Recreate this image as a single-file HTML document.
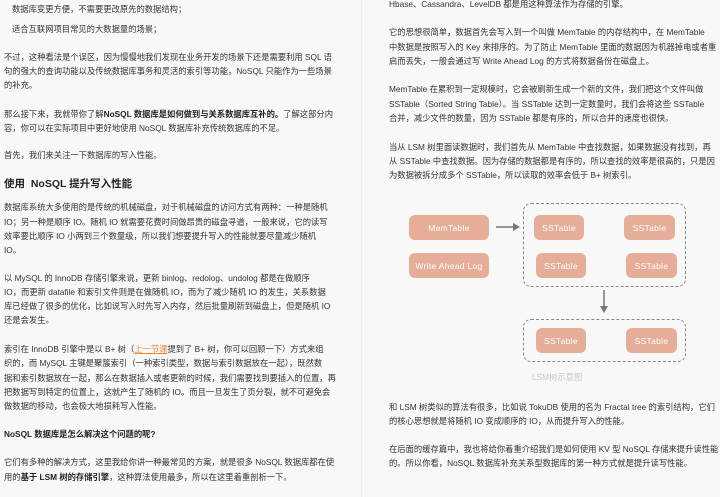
<!DOCTYPE html>
<html><head><meta charset="utf-8"><style>
html,body{margin:0;padding:0;}
body{width:720px;height:497px;background:#f8f8f8;position:relative;overflow:hidden;font-family:"Liberation Sans","Noto Sans CJK SC",sans-serif;color:#333;font-size:8.3px;}
.l{position:absolute;white-space:nowrap;line-height:14px;height:14px;}
.b{font-weight:bold;color:#222;}
.h{font-weight:bold;font-size:10.5px;color:#222;}
a{color:#e8892f;text-decoration:underline;}
.div{position:absolute;left:361px;top:0;width:1px;height:497px;background:#ececec;}
.box{position:absolute;background:#e6ad98;border-radius:6px;color:#fff;font-size:8.5px;display:flex;align-items:center;justify-content:center;font-family:"Liberation Sans",sans-serif;letter-spacing:0.3px;}
.dash{position:absolute;border:1.5px dashed #888;border-radius:8px;box-sizing:border-box;}
</style></head><body>
<div class="div"></div>
<div class="l" style="left:12px;top:2px">数据库变更方便，不需要更改原先的数据结构；</div>
<div class="l" style="left:12px;top:22px">适合互联网项目常见的大数据量的场景；</div>
<div class="l" style="left:4px;top:50px">不过，这种看法是个误区，因为慢慢地我们发现在业务开发的场景下还是需要利用 SQL 语</div>
<div class="l" style="left:4px;top:64px">句的强大的查询功能以及传统数据库事务和灵活的索引等功能，NoSQL 只能作为一些场景</div>
<div class="l" style="left:4px;top:78px">的补充。</div>
<div class="l" style="left:4px;top:107px">那么接下来，我就带你了解<span class="b">NoSQL 数据库是如何做到与关系数据库互补的。</span>了解这部分内</div>
<div class="l" style="left:4px;top:121px">容，你可以在实际项目中更好地使用 NoSQL 数据库补充传统数据库的不足。</div>
<div class="l" style="left:4px;top:148px">首先，我们来关注一下数据库的写入性能。</div>
<div class="l h" style="left:4px;top:177px">使用 &nbsp;NoSQL 提升写入性能</div>
<div class="l" style="left:4px;top:200px">数据库系统大多使用的是传统的机械磁盘，对于机械磁盘的访问方式有两种：一种是随机</div>
<div class="l" style="left:4px;top:215px">IO；另一种是顺序 IO。随机 IO 就需要花费时间做昂贵的磁盘寻道，一般来说，它的读写</div>
<div class="l" style="left:4px;top:229px">效率要比顺序 IO 小两到三个数量级，所以我们想要提升写入的性能就要尽量减少随机</div>
<div class="l" style="left:4px;top:243px">IO。</div>
<div class="l" style="left:4px;top:271px">以 MySQL 的 InnoDB 存储引擎来说，更新 binlog、redolog、undolog 都是在做顺序</div>
<div class="l" style="left:4px;top:285px">IO，而更新 datafile 和索引文件则是在做随机 IO，而为了减少随机 IO 的发生，关系数据</div>
<div class="l" style="left:4px;top:299px">库已经做了很多的优化，比如说写入时先写入内存，然后批量刷新到磁盘上，但是随机 IO</div>
<div class="l" style="left:4px;top:313px">还是会发生。</div>
<div class="l" style="left:4px;top:342px">索引在 InnoDB 引擎中是以 B+ 树（<a>上一节课</a>提到了 B+ 树，你可以回顾一下）方式来组</div>
<div class="l" style="left:4px;top:356px">织的，而 MySQL 主键是聚簇索引（一种索引类型，数据与索引数据放在一起），既然数</div>
<div class="l" style="left:4px;top:371px">据和索引数据放在一起，那么在数据插入或者更新的时候，我们需要找到要插入的位置，再</div>
<div class="l" style="left:4px;top:385px">把数据写到特定的位置上，这就产生了随机的 IO。而且一旦发生了页分裂，就不可避免会</div>
<div class="l" style="left:4px;top:399px">做数据的移动，也会极大地损耗写入性能。</div>
<div class="l b" style="left:4px;top:427px">NoSQL 数据库是怎么解决这个问题的呢?</div>
<div class="l" style="left:4px;top:455px">它们有多种的解决方式，这里我给你讲一种最常见的方案，就是很多 NoSQL 数据库都在使</div>
<div class="l" style="left:4px;top:470px">用的<span class="b">基于 LSM 树的存储引擎</span>，这种算法使用最多，所以在这里着重剖析一下。</div>

<div class="l" style="left:389px;top:-3px">Hbase、Cassandra、LevelDB 都是用这种算法作为存储的引擎。</div>
<div class="l" style="left:389px;top:25px">它的思想很简单，数据首先会写入到一个叫做 MemTable 的内存结构中，在 MemTable</div>
<div class="l" style="left:389px;top:40px">中数据是按照写入的 Key 来排序的。为了防止 MemTable 里面的数据因为机器掉电或者重</div>
<div class="l" style="left:389px;top:54px">启而丢失，一般会通过写 Write Ahead Log 的方式将数据备份在磁盘上。</div>
<div class="l" style="left:389px;top:82px">MemTable 在累积到一定规模时，它会被刷新生成一个新的文件，我们把这个文件叫做</div>
<div class="l" style="left:389px;top:97px">SSTable（Sorted String Table）。当 SSTable 达到一定数量时，我们会将这些 SSTable</div>
<div class="l" style="left:389px;top:111px">合并，减少文件的数量，因为 SSTable 都是有序的，所以合并的速度也很快。</div>
<div class="l" style="left:389px;top:140px">当从 LSM 树里面读数据时，我们首先从 MemTable 中查找数据，如果数据没有找到，再</div>
<div class="l" style="left:389px;top:154px">从 SSTable 中查找数据。因为存储的数据都是有序的，所以查找的效率是很高的，只是因</div>
<div class="l" style="left:389px;top:168px">为数据被拆分成多个 SSTable，所以读取的效率会低于 B+ 树索引。</div>

<div class="box" style="left:409px;top:215px;width:80px;height:25px">MemTable</div>
<div class="box" style="left:409px;top:253px;width:80px;height:25px">Write Ahead Log</div>
<svg style="position:absolute;left:494px;top:221px" width="28" height="12"><line x1="2" y1="6" x2="20" y2="6" stroke="#777" stroke-width="1.5"/><path d="M19 2 L26 6 L19 10 Z" fill="#777"/></svg>
<div class="dash" style="left:523px;top:203px;width:163px;height:84px"></div>
<div class="box" style="left:534px;top:215px;width:50px;height:25px">SSTable</div>
<div class="box" style="left:624px;top:215px;width:51px;height:25px">SSTable</div>
<div class="box" style="left:536px;top:253px;width:50px;height:25px">SSTable</div>
<div class="box" style="left:626px;top:253px;width:51px;height:25px">SSTable</div>
<svg style="position:absolute;left:598px;top:289px" width="12" height="26"><line x1="6" y1="1" x2="6" y2="18" stroke="#777" stroke-width="1.5"/><path d="M2 17 L6 24 L10 17 Z" fill="#777"/></svg>
<div class="dash" style="left:523px;top:319px;width:163px;height:43px"></div>
<div class="box" style="left:536px;top:328px;width:50px;height:25px">SSTable</div>
<div class="box" style="left:626px;top:328px;width:51px;height:25px">SSTable</div>
<div class="l" style="left:532px;top:370px;color:#c8c8c8">LSM树示意图</div>

<div class="l" style="left:389px;top:400px">和 LSM 树类似的算法有很多，比如说 TokuDB 使用的名为 Fractal tree 的索引结构，它们</div>
<div class="l" style="left:389px;top:414px">的核心思想就是将随机 IO 变成顺序的 IO，从而提升写入的性能。</div>
<div class="l" style="left:389px;top:442px">在后面的缓存篇中，我也将给你着重介绍我们是如何使用 KV 型 NoSQL 存储来提升读性能</div>
<div class="l" style="left:389px;top:456px">的。所以你看，NoSQL 数据库补充关系型数据库的第一种方式就是提升读写性能。</div>
</body></html>
